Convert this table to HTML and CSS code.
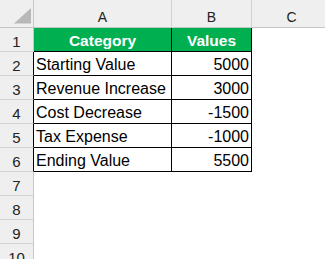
FILE: index.html
```html
<!DOCTYPE html>
<html>
<head>
<meta charset="utf-8">
<link rel="stylesheet" href="styles.css">
</head>
<body>
<div class="sheet">
  <div class="corner"><svg width="33" height="27" viewBox="0 0 33 27"><polygon points="31,8 31,23.5 14,23.5" fill="#b8b8b8"/></svg></div>
  <div class="colhead">A</div>
  <div class="colhead">B</div>
  <div class="colhead">C</div>

  <div class="rowhead">1</div>
  <div class="cell hdr">Category</div>
  <div class="cell hdr">Values</div>
  <div class="cell blank"></div>

  <div class="rowhead tb">2</div>
  <div class="cell txt">Starting Value</div>
  <div class="cell num">5000</div>
  <div class="cell blank"></div>

  <div class="rowhead tb">3</div>
  <div class="cell txt">Revenue Increase</div>
  <div class="cell num">3000</div>
  <div class="cell blank"></div>

  <div class="rowhead tb">4</div>
  <div class="cell txt">Cost Decrease</div>
  <div class="cell num">-1500</div>
  <div class="cell blank"></div>

  <div class="rowhead tb">5</div>
  <div class="cell txt">Tax Expense</div>
  <div class="cell num">-1000</div>
  <div class="cell blank"></div>

  <div class="rowhead tb">6</div>
  <div class="cell txt">Ending Value</div>
  <div class="cell num">5500</div>
  <div class="cell blank"></div>

  <div class="rowhead">7</div>
  <div class="cell blank"></div><div class="cell blank"></div><div class="cell blank"></div>
  <div class="rowhead">8</div>
  <div class="cell blank"></div><div class="cell blank"></div><div class="cell blank"></div>
  <div class="rowhead">9</div>
  <div class="cell blank"></div><div class="cell blank"></div><div class="cell blank"></div>
  <div class="rowhead">10</div>
  <div class="cell blank"></div><div class="cell blank"></div><div class="cell blank"></div>
</div>
</body>
</html>
```

FILE: styles.css
```css
html, body {
  margin: 0;
  padding: 0;
  background: #ffffff;
  overflow: hidden;
}

body {
  width: 325px;
  height: 259px;
  font-family: "Liberation Sans", Arial, sans-serif;
  color: #000000;
}

.sheet {
  display: grid;
  grid-template-columns: 34px 138px 80px 80px;
  grid-template-rows: 28px repeat(10, 24px);
  width: 332px;
}

.sheet > div {
  box-sizing: border-box;
  border-right: 1px solid transparent;
  border-bottom: 1px solid transparent;
  display: flex;
  align-items: flex-end;
  white-space: nowrap;
  overflow: hidden;
}

.corner {
  background: #efefef;
  border-right-color: #c6c6c6 !important;
  border-bottom-color: #c6c6c6 !important;
}

.corner svg {
  display: block;
  align-self: flex-start;
}

.colhead {
  background: #efefef;
  border-right-color: #d2d2d2 !important;
  border-bottom-color: #c6c6c6 !important;
  justify-content: center;
  font-size: 14px;
  line-height: 14px;
  padding-bottom: 3px;
  color: #222222;
}

.rowhead {
  background: #efefef;
  border-right-color: #c6c6c6 !important;
  border-bottom-color: #d2d2d2 !important;
  justify-content: center;
  font-size: 15px;
  line-height: 15px;
  padding-bottom: 2px;
  color: #222222;
}

.rowhead.tb {
  border-right-color: #000000 !important;
}

.cell.hdr {
  background: #00b050;
  color: #ffffff;
  font-weight: bold;
  font-size: 15.5px;
  line-height: 15.5px;
  justify-content: center;
  padding-bottom: 3px;
  border-right-color: #000000;
  border-bottom-color: #000000;
}

.cell.txt {
  font-size: 16px;
  line-height: 16px;
  padding-left: 2px;
  padding-bottom: 2px;
  border-right-color: #000000;
  border-bottom-color: #000000;
}

.cell.num {
  font-size: 16px;
  line-height: 16px;
  justify-content: flex-end;
  padding-right: 2px;
  padding-bottom: 2px;
  border-right-color: #000000;
  border-bottom-color: #000000;
}

.cell.blank {
  background: #ffffff;
}
```
